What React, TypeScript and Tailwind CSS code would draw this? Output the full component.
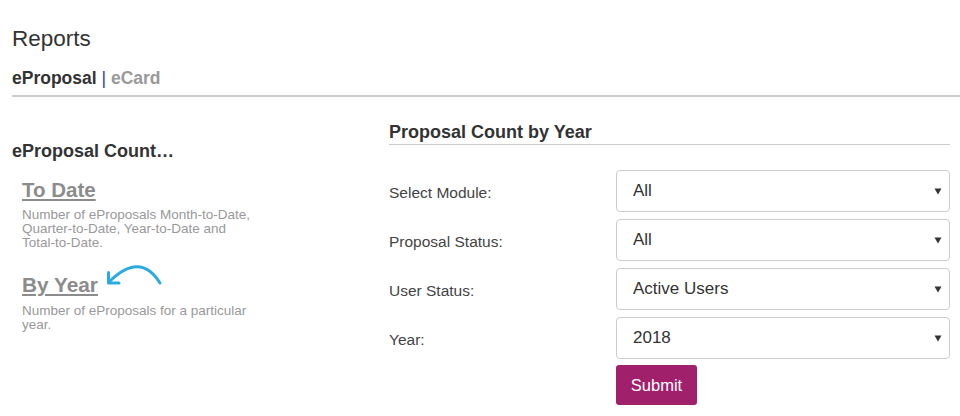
import React, { useState } from 'react';

const Chevron: React.FC = () => (
    <svg className="pointer-events-none absolute right-[8px] top-1/2 -translate-y-1/2" width="8" height="8" viewBox="0 0 8 8">
        <path d="M0.5 1.5 H7.5 L4 7.5 Z" fill="#333" />
    </svg>
);

interface FieldProps {
    label: string;
    value: string;
    options: string[];
    onChange: (v: string) => void;
}

const Field: React.FC<FieldProps> = ({ label, value, options, onChange }) => (
    <div className="flex items-center">
        <label className="w-[227px] pt-[3px] text-[15.5px] leading-[20px] text-[#444]">{label}</label>
        <div className="relative flex-1">
            <select
                value={value}
                onChange={e => onChange(e.target.value)}
                className="h-[42px] w-full appearance-none rounded-[4px] border border-[#ccc] bg-white pl-[16px] pr-[30px] text-[17px] text-[#333] outline-none"
            >
                {options.map(o => (
                    <option key={o} value={o}>{o}</option>
                ))}
            </select>
            <Chevron />
        </div>
    </div>
);

const App: React.FC = () => {
    const [module, setModule] = useState('All');
    const [status, setStatus] = useState('All');
    const [userStatus, setUserStatus] = useState('Active Users');
    const [year, setYear] = useState('2018');

    return (
        <div className="w-[960px] h-[416px] overflow-hidden bg-white font-['Liberation_Sans',Arial,sans-serif]">
            {/* header */}
            <div className="pl-[12px] pt-[26px]">
                <h1 className="text-[22.5px] leading-[26px] font-normal text-[#333]">Reports</h1>
                <div className="mt-[16px] text-[17.5px] leading-[20px] font-bold">
                    <span className="text-[#333]">eProposal</span>
                    <span className="font-normal text-[#2d4a8a]"> | </span>
                    <span className="text-[#999]">eCard</span>
                </div>
                <div className="mt-[7px] h-[2px] bg-[#ccc]" />
            </div>

            <div className="flex">
                {/* left column */}
                <div className="w-[389px] pl-[12px]">
                    <h3 className="mt-[44px] text-[18px] leading-[20px] font-bold text-[#333]">eProposal Count…</h3>
                    <div className="pl-[10px]">
                        <a href="#" className="mt-[17px] block w-fit text-[20.5px] leading-[24px] font-bold text-[#8c8c8c] underline">To Date</a>
                        <p className="mt-[5.5px] w-[233px] text-[13.5px] leading-[14px] text-[#999]">
                            Number of eProposals Month-to-Date, Quarter-to-Date, Year-to-Date and Total-to-Date.
                        </p>
                        <div className="relative mt-[23.5px]">
                            <a href="#" className="block w-fit text-[20.8px] leading-[24px] font-bold text-[#8c8c8c] underline">By Year</a>
                            <svg className="absolute left-[82px] top-[-10px]" width="62" height="26" viewBox="0 0 62 26" fill="none">
                                <path d="M56 20 Q36 -12 5 19" stroke="#29abe2" strokeWidth="3" strokeLinecap="round" />
                                <path d="M4.5 9.5 V20 H15" stroke="#29abe2" strokeWidth="3" strokeLinecap="round" strokeLinejoin="round" />
                            </svg>
                        </div>
                        <p className="mt-[6.5px] w-[233px] text-[13.5px] leading-[14px] text-[#999]">
                            Number of eProposals for a particular year.
                        </p>
                    </div>
                </div>

                {/* right column */}
                <div className="flex-1 pr-[10px]">
                    <h3 className="mt-[25px] border-b border-[#ccc] pb-[2px] text-[18px] leading-[20px] font-bold text-[#333]">
                        Proposal Count by Year
                    </h3>
                    <div className="mt-[25px] flex flex-col gap-[7px]">
                        <Field label="Select Module:" value={module} options={['All', 'eProposal', 'eCard']} onChange={setModule} />
                        <Field label="Proposal Status:" value={status} options={['All', 'Open', 'Closed']} onChange={setStatus} />
                        <Field label="User Status:" value={userStatus} options={['Active Users', 'Inactive Users', 'All Users']} onChange={setUserStatus} />
                        <Field label="Year:" value={year} options={['2018', '2017', '2016']} onChange={setYear} />
                    </div>
                    <div className="pl-[227px]">
                        <button className="mt-[6px] h-[40px] w-[81px] rounded-[3px] bg-[#a0206b] text-[16.5px] text-white">Submit</button>
                    </div>
                </div>
            </div>
        </div>
    );
};

export default App;
